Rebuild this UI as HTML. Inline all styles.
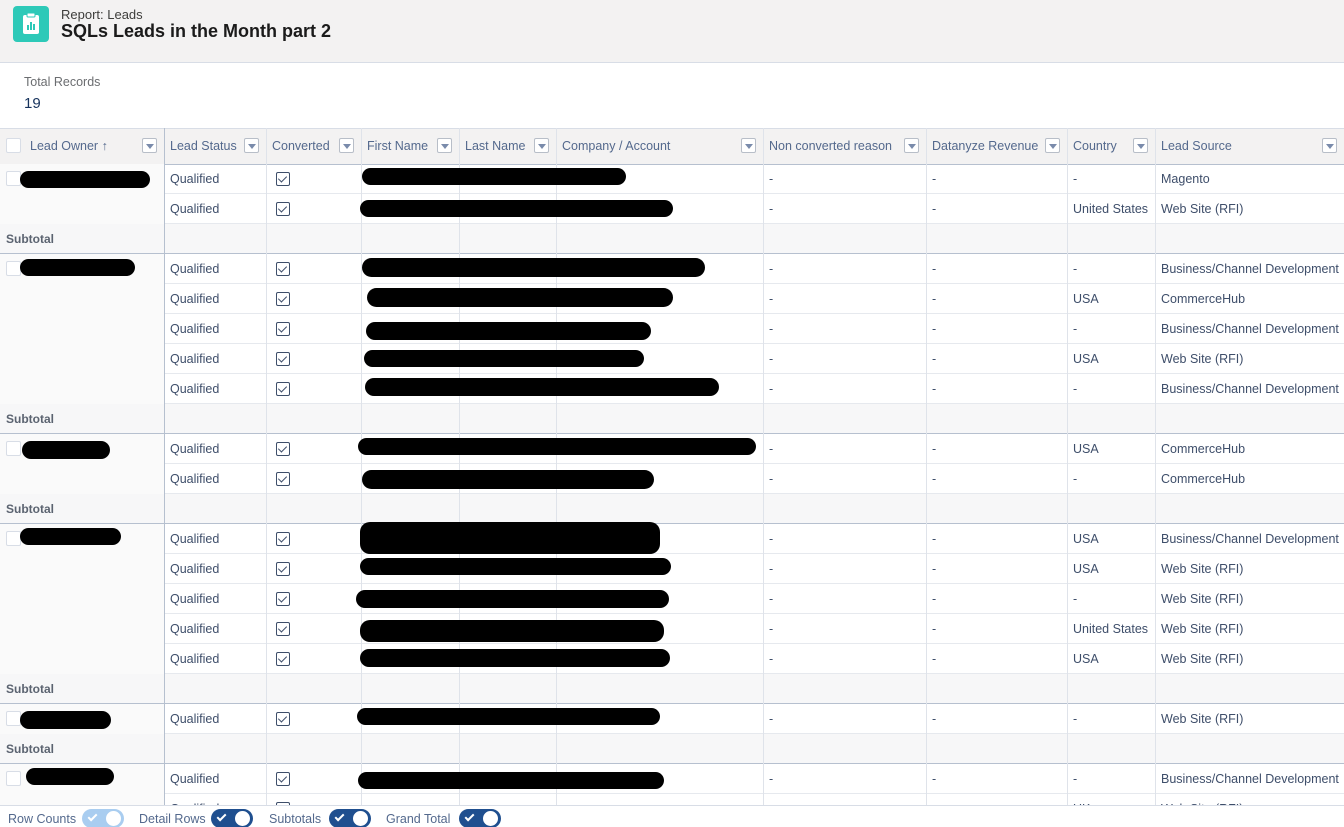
<!DOCTYPE html>
<html style="overflow:hidden;height:827px"><head><meta charset="utf-8"><style>
*{margin:0;padding:0;box-sizing:border-box}
body{width:1344px;height:827px;overflow:hidden;background:#fff;font-family:"Liberation Sans",sans-serif;position:relative;font-size:12.5px;color:#3e4e6a}
.top{position:absolute;left:0;top:0;width:1344px;height:63px;background:#f3f2f2;border-bottom:1px solid #d8dde6}
.icon{position:absolute;left:13px;top:6px;width:36px;height:36px;background:#2dc9b8;border-radius:4px}
.a{position:absolute;white-space:nowrap}
.hdr{position:absolute;top:128px;height:37px;left:0;width:1344px;background:#f3f2f2;border-top:1px solid #d8dde6;border-bottom:1px solid #b6c0cf}
.dd{position:absolute;width:15px;height:15px;border:1px solid #b8bec8;background:#fff;border-radius:2px}
.dd:after{content:"";position:absolute;left:3px;top:5px;border-left:4px solid transparent;border-right:4px solid transparent;border-top:5px solid #7a8bab}
.vl{position:absolute;width:1px;background:#dfe3ea}
.cb{position:absolute;width:14px;height:14px;border:1.5px solid #3e4e6a;border-radius:2px;background:#fff}
.cb:after{content:"";position:absolute;left:3px;top:1px;width:4px;height:7px;border-right:1.5px solid #3e4e6a;border-bottom:1.5px solid #3e4e6a;transform:rotate(45deg)}
.ob{position:absolute;width:15px;height:15px;border:1px solid #d8dde6;background:#fff;border-radius:2px}
.blob{position:absolute;background:#000;border-radius:10px}
.tg{position:absolute;top:809px;width:42px;height:19px;border-radius:10px;background:#1f4f8f}
.tg:after{content:"";position:absolute;right:3px;top:2px;width:15px;height:15px;border-radius:50%;background:#fff}
.tg i{position:absolute;left:8px;top:3px;width:5px;height:9px;border-right:2px solid #fff;border-bottom:2px solid #fff;transform:rotate(45deg)}
</style></head><body>
<div class="top"></div>
<div class="icon"><svg width="36" height="36"><rect x="10" y="9" width="16" height="19" rx="2" fill="#fff"/><rect x="14" y="7" width="8" height="4" rx="1" fill="#fff" stroke="#2dc9b8" stroke-width="1"/><rect x="14" y="19" width="2" height="5" fill="#2dc9b8"/><rect x="17" y="16" width="2" height="8" fill="#2dc9b8"/><rect x="20" y="18" width="2" height="6" fill="#2dc9b8"/></svg></div>
<div class="a" style="left:61px;top:7px;font-size:13px;color:#3e3e3c">Report: Leads</div>
<div class="a" style="left:61px;top:21px;font-size:18px;font-weight:bold;color:#1b1b1b">SQLs Leads in the Month part 2</div>
<div class="a" style="left:24px;top:75px;font-size:12.5px;color:#6b6d70">Total Records</div>
<div class="a" style="left:24px;top:95px;font-size:15px;color:#16325c">19</div>
<div class="hdr"></div>
<div id="t"></div>
<div style="position:absolute;left:0;top:805px;width:1344px;height:22px;background:#fff;border-top:1px solid #d8dde6"></div>
<div class="a" style="left:8px;top:812px;color:#54698d">Row Counts</div>
<div class="tg" style="left:82px;background:#a9cdf0"><i></i></div>
<div class="a" style="left:139px;top:812px;color:#54698d">Detail Rows</div>
<div class="tg" style="left:211px"><i></i></div>
<div class="a" style="left:269px;top:812px;color:#54698d">Subtotals</div>
<div class="tg" style="left:329px"><i></i></div>
<div class="a" style="left:386px;top:812px;color:#54698d">Grand Total</div>
<div class="tg" style="left:459px"><i></i></div>
<script>
var xs=[0,164,266,361,459,556,763,926,1067,1155,1344];
var hn=["Lead Owner ↑","Lead Status","Converted","First Name","Last Name","Company / Account","Non converted reason","Datanyze Revenue","Country","Lead Source"];
var h="";
for(var i=0;i<10;i++){
 var l=xs[i]+(i==0?30:6);
 h+='<div class="a" style="left:'+l+'px;top:139px;color:#54698d;font-size:12.5px">'+hn[i]+'</div>';
 h+='<div class="dd" style="left:'+(xs[i+1]-22)+'px;top:138px"></div>';
}
h+='<div class="ob" style="left:6px;top:138px"></div>';
var rows=[["-","Magento"],["United States","Web Site (RFI)"],0,
["-","Business/Channel Development"],["USA","CommerceHub"],["-","Business/Channel Development"],["USA","Web Site (RFI)"],["-","Business/Channel Development"],0,
["USA","CommerceHub"],["-","CommerceHub"],0,
["USA","Business/Channel Development"],["USA","Web Site (RFI)"],["-","Web Site (RFI)"],["United States","Web Site (RFI)"],["USA","Web Site (RFI)"],0,
["-","Web Site (RFI)"],0,["-","Business/Channel Development"],["UK","Web Site (RFI)"]];
var y=164,gs=164;
var groups=[];
rows.forEach(function(r,k){
 if(r===0){
  h+='<div style="position:absolute;left:0;top:'+y+'px;width:1344px;height:30px;background:#f7f7f8;border-bottom:1px solid #b6c0cf"></div>';
  h+='<div class="a" style="left:6px;top:'+(y+8)+'px;font-weight:bold;color:#5b6370;font-size:12px">Subtotal</div>';
  groups.push([gs,y]);gs=y+30;
 }else{
  h+='<div style="position:absolute;left:164px;top:'+y+'px;width:1180px;height:30px;border-bottom:1px solid #e6e9ee"></div>';
  h+='<div class="a" style="left:170px;top:'+(y+8)+'px">Qualified</div>';
  h+='<div class="cb" style="left:276px;top:'+(y+8)+'px"></div>';
  h+='<div class="a" style="left:769px;top:'+(y+8)+'px">-</div><div class="a" style="left:932px;top:'+(y+8)+'px">-</div>';
  h+='<div class="a" style="left:1073px;top:'+(y+8)+'px">'+r[0]+'</div><div class="a" style="left:1161px;top:'+(y+8)+'px">'+r[1]+'</div>';
 }
 y+=30;
});
groups.push([gs,805]);
groups.forEach(function(g){
 h='<div style="position:absolute;left:0;top:'+g[0]+'px;width:164px;height:'+(g[1]-g[0])+'px;background:#fafafa"></div>'+h;
 h+='<div class="ob" style="left:6px;top:'+(g[0]+7)+'px"></div>';
});
for(var i=1;i<10;i++) h+='<div class="vl" style="left:'+xs[i]+'px;top:128px;height:677px;'+(i==1?'background:#b6c0cf':'')+'"></div>';
var bl=[[20,171,130,17],[362,168,264,17],[360,200,313,17],[20,259,115,17],[362,258,343,19],[367,288,306,19],[366,322,285,18],[364,350,280,17],[365,378,354,18],[22,441,88,18],[358,438,398,17],[362,470,292,19],[20,528,101,17],[360,522,300,32],[360,558,311,17],[356,590,313,18],[360,620,304,22],[360,649,310,18],[20,711,91,18],[357,708,303,17],[26,768,88,17],[358,772,306,17]];
bl.forEach(function(b){h+='<div class="blob" style="left:'+b[0]+'px;top:'+b[1]+'px;width:'+b[2]+'px;height:'+b[3]+'px"></div>';});
document.getElementById('t').innerHTML=h;
</script>
</body></html>
